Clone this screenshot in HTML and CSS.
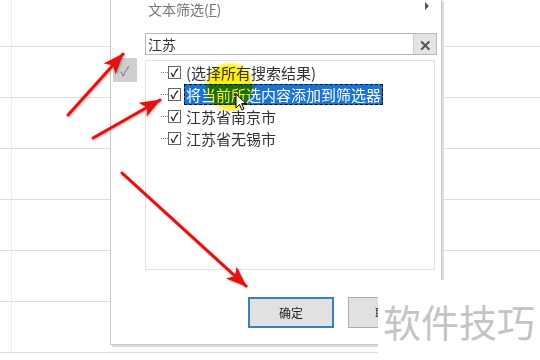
FILE: index.html
```html
<!DOCTYPE html>
<html>
<head>
  <meta name="viewport" content="width=device-width, initial-scale=1">
  <meta charset="UTF-8">
  <link rel="stylesheet" href="styles.css">
</head>
<body>
  <div class="sheet">
    <div class="row first"><div class="cell-a"></div><div class="cell-b"></div></div>
    <div class="row"><div class="cell-a"></div><div class="cell-b"></div></div>
    <div class="row"><div class="cell-a"></div><div class="cell-b"></div></div>
    <div class="row"><div class="cell-a"></div><div class="cell-b"></div></div>
    <div class="row"><div class="cell-a"></div><div class="cell-b"></div></div>
    <div class="row"><div class="cell-a"></div><div class="cell-b"></div></div>
    <div class="row"><div class="cell-a"></div><div class="cell-b"></div></div>
  </div>

  <div class="dialog">
    <div class="menu-row">
      <span>文本筛选(<u>F</u>)</span>
      <span class="sub-arrow"></span>
    </div>
    <div class="search">
      <span class="search-text">江苏</span>
      <span class="clear">✕</span>
    </div>
    <div class="body-row">
      <div class="gutter"><div class="tick">✓</div></div>
      <div class="list">
        <div class="item"><span class="dash"></span><span class="box">✓</span><span class="label">(选择所有搜索结果)</span></div>
        <div class="item"><span class="dash"></span><span class="box">✓</span><span class="label selected">将当前所选内容添加到筛选器</span></div>
        <div class="item"><span class="dash"></span><span class="box">✓</span><span class="label">江苏省南京市</span></div>
        <div class="item"><span class="dash"></span><span class="box">✓</span><span class="label">江苏省无锡市</span></div>
      </div>
    </div>
    <div class="buttons">
      <button class="btn ok">确定</button>
      <button class="btn cancel">取消</button>
    </div>
  </div>

  <div class="spot"></div>
  <svg class="cursor" width="14" height="20" viewBox="0 0 14 20">
    <path d="M1 1 L1 15 L4.5 11.5 L7 17 L9 16 L6.6 10.6 L11 10.6 Z" fill="#fff" stroke="#000" stroke-width="1"/>
  </svg>

  <svg class="arrows" width="540" height="360" viewBox="0 0 540 360">
    <defs>
      <marker id="head" markerUnits="userSpaceOnUse" markerWidth="22" markerHeight="16" refX="20" refY="8" orient="auto">
        <path d="M0 0 L21 8 L0 16 L5 8 Z" fill="#e3120f"/>
      </marker>
    </defs>
    <g stroke="#e3120f" stroke-width="3" stroke-linecap="round" fill="none" marker-end="url(#head)">
      <line x1="68" y1="115" x2="123" y2="54"/>
      <line x1="93" y1="138" x2="160" y2="100"/>
      <line x1="122" y1="173" x2="246" y2="286"/>
    </g>
  </svg>

  <div class="watermark">软件技巧</div>
</body>
</html>
```

FILE: styles.css
```css
html, body {
  margin: 0;
  padding: 0;
  width: 540px;
  height: 360px;
  overflow: hidden;
  background: #fff;
  font-family: "Noto Sans CJK SC", "Noto Sans", sans-serif;
}

body {
  position: relative;
}

.sheet {
  display: flex;
  flex-direction: column;
}

.row {
  display: grid;
  grid-template-columns: 12px 1fr;
  height: 50px;
  border-bottom: 1px solid #dedede;
}

.row.first {
  height: 46px;
}

.cell-a {
  border-right: 1px solid #ececec;
}

.dialog {
  position: absolute;
  left: 110px;
  top: -1px;
  width: 330px;
  height: 344px;
  background: #fff;
  border: 1px solid #c9c9c9;
  box-shadow: 2px 2px 0 #dcdcdc;
  display: flex;
  flex-direction: column;
}

.menu-row {
  height: 33px;
  display: flex;
  align-items: center;
  justify-content: space-between;
  padding: 0 12px 0 37px;
  margin-top: -8px;
  font-size: 14px;
  color: #777;
}

.menu-row u {
  text-decoration: underline;
}

.sub-arrow {
  width: 0;
  height: 0;
  border-top: 4px solid transparent;
  border-bottom: 4px solid transparent;
  border-left: 4px solid #555;
  margin-top: -6px;
}

.search {
  margin: 8px 4px 0 34px;
  height: 20px;
  border: 1px solid #b9b9b9;
  display: flex;
  align-items: center;
  justify-content: space-between;
}

.search-text {
  font-size: 14px;
  color: #333;
  padding-left: 2px;
}

.clear {
  width: 22px;
  height: 20px;
  background: #e4e4e4;
  border-left: 1px solid #cfcfcf;
  color: #555;
  font-size: 15px;
  font-weight: bold;
  display: flex;
  align-items: center;
  justify-content: center;
}

.body-row {
  display: flex;
  margin-top: 3px;
}

.gutter {
  width: 34px;
}

.tick {
  width: 24px;
  height: 24px;
  margin-left: 2px;
  background: #cfcfcf;
  color: #777;
  font-size: 13px;
  display: flex;
  align-items: center;
  justify-content: center;
}

.list {
  width: 288px;
  height: 208px;
  margin-top: 2px;
  border: 1px solid #e2e2e2;
}

.item {
  height: 22px;
  display: flex;
  align-items: center;
  font-size: 15px;
  color: #333;
}

.dash {
  width: 7px;
  height: 0;
  border-top: 1px dotted #777;
  margin-left: 15px;
}

.box {
  width: 11px;
  height: 11px;
  border: 1px solid #666;
  font-size: 11px;
  font-weight: bold;
  line-height: 11px;
  text-align: center;
  color: #111;
  background: #fff;
}

.label {
  margin-left: 5px;
  white-space: nowrap;
  line-height: 19px;
}

.selected {
  margin-left: 3px;
  padding: 0 1px;
  background: #1a74d6;
  color: #fff;
  border: 1px dashed #111;
}

.buttons {
  display: flex;
  gap: 14px;
  margin: 27px 0 0 137px;
}

.btn {
  width: 86px;
  height: 31px;
  font-family: "Noto Sans CJK SC", sans-serif;
  font-size: 12px;
  color: #222;
  background: #e1e1e1;
  border: 1px solid #adadad;
  padding: 0;
}

.btn.ok {
  border: 2px solid #3d7fbf;
  box-shadow: inset 0 0 0 1px #cfe4f7;
}

.btn.cancel {
  text-align: left;
  padding-left: 26px;
}

.spot {
  position: absolute;
  left: 204px;
  top: 61px;
  width: 52px;
  height: 52px;
  border-radius: 50%;
  background: radial-gradient(circle closest-side, rgba(255, 236, 0, 0.92) 78%, rgba(255, 240, 0, 0) 100%);
  mix-blend-mode: multiply;
}

.cursor {
  position: absolute;
  left: 235px;
  top: 93px;
}

.arrows {
  position: absolute;
  left: 0;
  top: 0;
  filter: drop-shadow(1px 1px 1px rgba(120, 0, 0, 0.35));
}

.watermark {
  position: absolute;
  left: 378px;
  top: 280px;
  width: 162px;
  height: 80px;
  background: #fff;
  color: #c4c4c4;
  font-size: 38px;
  display: flex;
  align-items: center;
  padding-left: 5px;
  box-sizing: border-box;
}
```
